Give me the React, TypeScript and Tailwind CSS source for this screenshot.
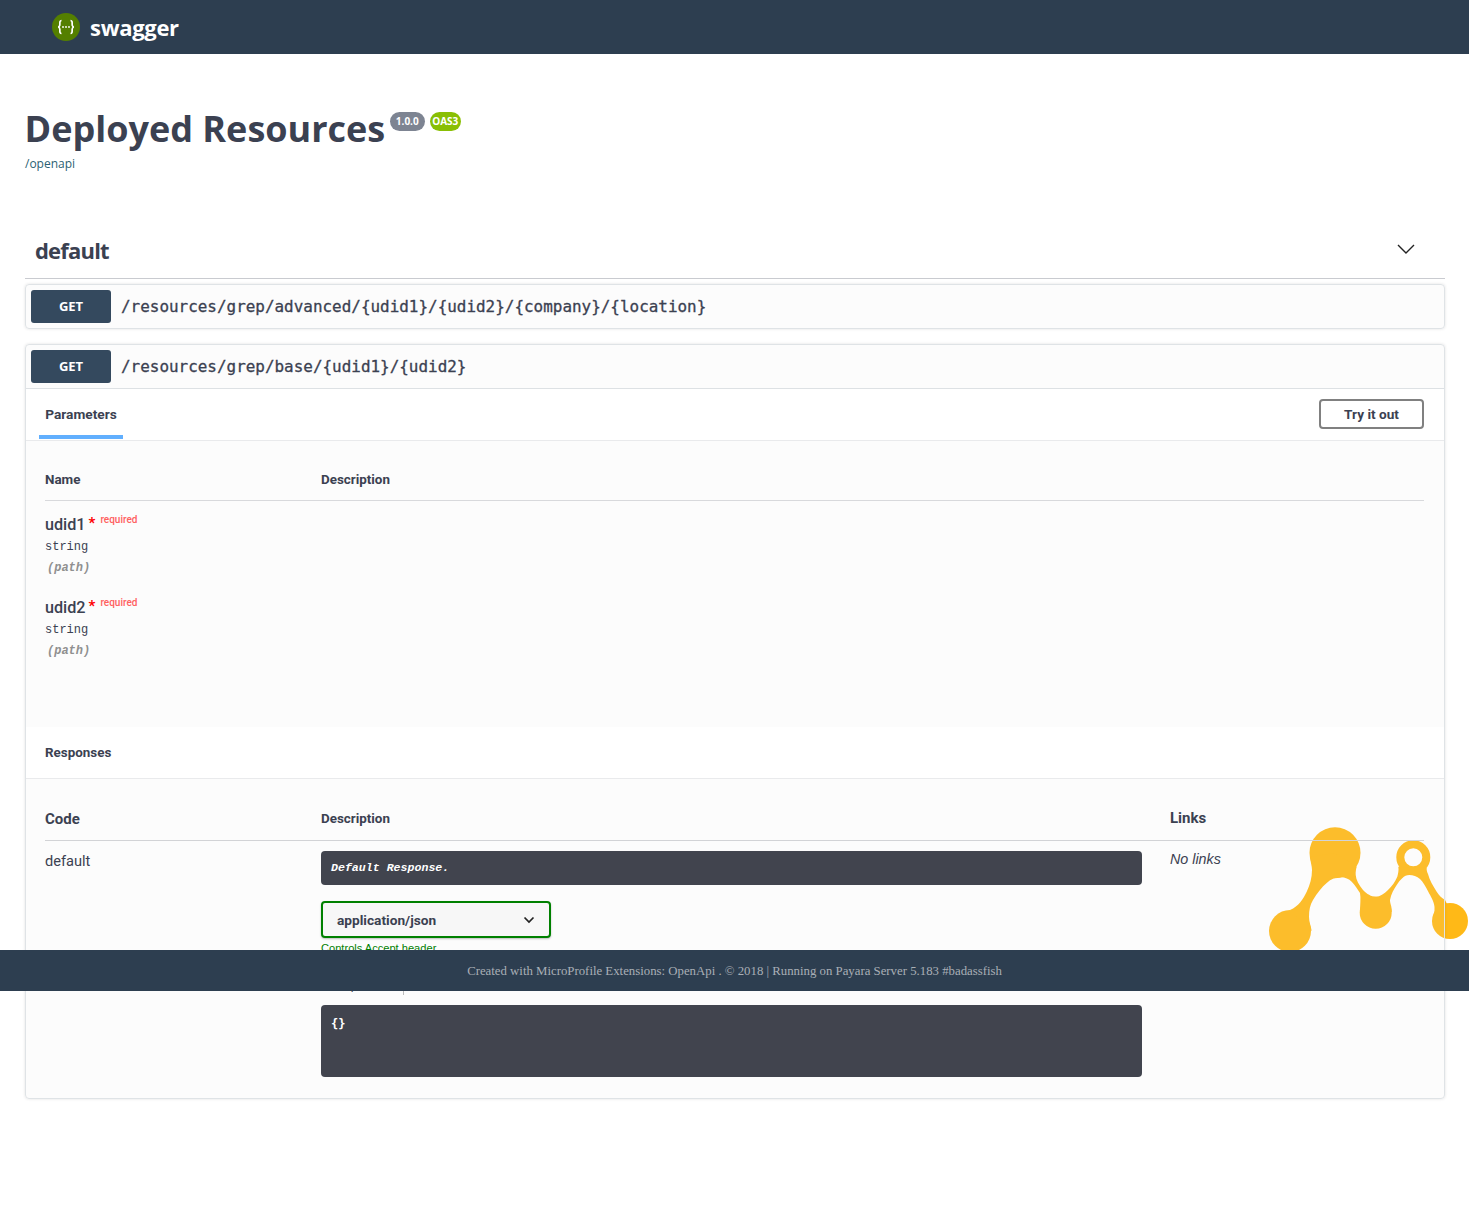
import React from "react";

const sans = "font-['Roboto',sans-serif]";
const open = "font-['Open_Sans',sans-serif]";
const mono = "font-['DejaVu_Sans_Mono',monospace]";
const cour = "font-['Liberation_Mono',monospace]";

function Summary({ path, border }: { path: string; border?: boolean }) {
  return (
    <div className={`flex h-[43px] items-center px-[5px] ${border ? "box-content border-b border-[#dde1e4]" : ""}`}>
      <div className={`flex h-[33px] w-[80px] items-center justify-center rounded-[3px] bg-[#34495e] pt-[1px] text-[13px] font-bold text-white ${open}`}>GET</div>
      <div className={`ml-[10px] text-[15.95px] text-[#3b4151] [-webkit-text-stroke:0.3px_#3b4151] ${mono}`}>{path}</div>
    </div>
  );
}

function Param({ name, top }: { name: string; top: string }) {
  return (
    <div className={top}>
      <div className="flex h-[20px] items-start">
        <span className={`text-[16.2px] leading-[22px] font-medium text-[#3b4151] ${sans}`}>{name}</span>
        <span className={`ml-[3px] text-[15px] leading-[18px] font-bold text-[#ff0000] ${sans}`}>*</span>
        <span className={`ml-[5px] mt-[-2px] text-[10px] leading-[16px] font-medium text-[#ff6060] ${sans}`}>required</span>
      </div>
      <div className={`mt-[5px] text-[12px] leading-[16px] text-[#3b4151] ${cour}`}>string</div>
      <div className={`ml-[2px] mt-[5px] text-[12px] leading-[16px] font-bold italic text-[#909090] ${cour}`}>(path)</div>
    </div>
  );
}

function Logo() {
  return (
    <svg className="absolute left-[1260px] top-[820px] h-[130px] w-[209px]" viewBox="0 0 209 130" fill="#ffb917">
      <circle cx="75" cy="32.7" r="25.5" />
      <circle cx="30" cy="111" r="21" />
      <circle cx="115.7" cy="92.7" r="16" />
      <circle cx="190" cy="101" r="18" />
      <circle cx="153.3" cy="37.3" r="13" fill="none" stroke="#ffb917" strokeWidth="8" />
      <path d="M50 37C50.5 42 52 46 52 50C52 58 50 65 46.7 71.7C43 79 39 86 30 90L51.7 111C51 106 49 102 49 96.7C49 90 50 85 53 80C57 73 62 67 66.7 63C71 59 76 57.3 81 57.3C85 57.3 89 59 91.7 61.7C95 65 98 70 100 73C101 78 100 85 100 92L131.7 92C132 86 130 84 130 80C131 74 134 69 136.7 65C140 60 144 55 149.3 55C153 55 157 56.5 160 59C163 62 166 67 168.3 71.7C170.5 76 174 81 174.5 87C175 92 173 97 172.7 102L190 90L185 80C181.5 78 179 75 176.7 71.7C173 66 169.5 60 168 54C167 52 166.5 50 166.7 48L138.3 46.7C139 50 138 54 137.3 56.7C135 62 132 66 128 70C124 74 120 76.7 116 76.7C111 76.7 107 74 103 70C99 65 96 60 95.7 55C95.5 52 96 49 96.7 46.7L75 33Z" />
    </svg>
  );
}

export default function App() {
  return (
    <div className="relative h-[1213px] overflow-hidden bg-white">
      <header className="relative z-10 flex h-[54px] items-center bg-[#2d3e50] pl-[52px]">
        <svg width="28" height="28" viewBox="0 0 28 28">
          <circle cx="14" cy="14" r="14" fill="#547f00" />
          <path d="M9.5 7.5C7 7.5 8.2 11 7.7 12.5C7.4 13.5 6.8 14 6 14C6.8 14 7.4 14.5 7.7 15.5C8.2 17 7 20.5 9.5 20.5M18.5 7.5C21 7.5 19.8 11 20.3 12.5C20.6 13.5 21.2 14 22 14C21.2 14 20.6 14.5 20.3 15.5C19.8 17 21 20.5 18.5 20.5" fill="none" stroke="#fff" strokeWidth="1.7" />
          <circle cx="11" cy="14" r="0.9" fill="#fff" />
          <circle cx="14" cy="14" r="0.9" fill="#fff" />
          <circle cx="17" cy="14" r="0.9" fill="#fff" />
        </svg>
        <span className={`ml-[10px] text-[22px] leading-[30px] font-bold tracking-[-0.3px] text-white ${open}`}>swagger</span>
      </header>

      <Logo />

      <main className="relative z-10 pl-[25px] pr-[24px]">
        <div className="flex items-start pt-[50px]">
          <h1 className={`ml-[-0.5px] text-[36px] leading-[50px] font-bold text-[#3b4151] ${open}`}>Deployed Resources</h1>
          <span className={`ml-[4.5px] mt-[8px] flex h-[19px] w-[35px] items-center justify-center rounded-full bg-[#7d8492] text-[10px] font-bold text-white ${open}`}>1.0.0</span>
          <span className={`ml-[5px] mt-[8px] flex h-[19px] w-[31px] items-center justify-center rounded-full bg-[#89bf04] text-[10px] font-bold text-white ${open}`}>OAS3</span>
        </div>
        <div className={`mt-[1px] text-[12px] leading-[18px] text-[#2b5f73] ${open}`}>/openapi</div>

        <div className="mt-[50px] flex h-[56px] items-center justify-between border-b border-[#c9cbd0] pl-[10px] pr-[29px]">
          <h2 className={`text-[22px] font-bold tracking-[-0.8px] text-[#3b4151] ${open}`}>default</h2>
          <svg className="mb-[3px]" width="20" height="20" viewBox="0 0 20 20" fill="none" stroke="#222" strokeWidth="1.4">
            <path d="M2 6l8 8 8-8" />
          </svg>
        </div>

        <section className="mt-[5px] h-[45px] rounded-[4px] border border-[#dfe3e6] bg-[#e1e1e1]/10 shadow-[0_0_3px_rgba(0,0,0,0.12)]">
          <Summary path="/resources/grep/advanced/{udid1}/{udid2}/{company}/{location}" />
        </section>

        <section className="mt-[15px] h-[755px] rounded-[4px] border border-[#dfe3e6] bg-[#e1e1e1]/10 shadow-[0_0_3px_rgba(0,0,0,0.12)]">
          <Summary path="/resources/grep/base/{udid1}/{udid2}" border />

          <div className="flex h-[52px] justify-between border-b border-[#e9eaec] bg-white pl-[13px] pr-[20px]">
            <div className={`flex h-[50px] w-[84px] items-center justify-center border-b-[4px] border-[#61affe] pt-[4px] text-[13.7px] font-bold text-[#3b4151] ${sans}`}>Parameters</div>
            <button className={`mt-[10px] h-[30px] w-[105px] rounded-[4px] border-2 border-[#808080] text-[13.6px] font-bold text-[#3b4151] ${sans}`}>Try it out</button>
          </div>

          <div className="h-[286px] pl-[19px] pr-[20px]">
            <div className={`flex h-[60px] items-end border-b border-[#d8d9dc] pb-[10px] text-[13.4px] font-bold text-[#3b4151] ${sans}`}>
              <div className="w-[276px]">Name</div>
              <div>Description</div>
            </div>
            <Param name="udid1" top="mt-[13px]" />
            <Param name="udid2" top="mt-[21px]" />
          </div>

          <div className={`flex h-[52px] items-center border-b border-[#e9eaec] bg-white px-[19px] pt-[2px] text-[13.4px] font-bold text-[#3b4151] ${sans}`}>Responses</div>

          <div className="pl-[19px] pr-[20px]">
            <div className={`flex h-[62px] items-end border-b border-[#d2d3d6] pb-[11px] text-[13.4px] font-bold text-[#3b4151] ${sans}`}>
              <div className="mb-[-1px] w-[276px] text-[15px]">Code</div>
              <div className="w-[849px]">Description</div>
              <div className="text-[15px]">Links</div>
            </div>
            <div className="flex pt-[10px]">
              <div className={`w-[276px] text-[14.6px] leading-[20px] text-[#3b4151] ${sans}`}>default</div>
              <div className="w-[821px]">
                <div className={`flex h-[34px] items-center rounded-[4px] bg-[#41444e] px-[10px] text-[11.6px] font-bold italic text-white ${cour}`}>Default Response.</div>
                <div className={`mt-[16px] flex h-[37px] w-[230px] items-center justify-between rounded-[4px] border-2 border-[#008000] bg-[#f7f7f7] pl-[14px] pr-[13px] text-[13.7px] font-bold text-[#3b4151] shadow-[0_1px_2px_rgba(0,0,0,0.25)] ${sans}`}>
                  <span className="pt-[2px]">application/json</span>
                  <svg width="14" height="14" viewBox="0 0 14 14" fill="none" stroke="#222" strokeWidth="1.7"><path d="M2.5 4.5L7 9l4.5-4.5" /></svg>
                </div>
                <div className="mt-[4px] font-['Liberation_Sans',sans-serif] text-[11.1px] leading-[12px] text-[#008000]">Controls Accept header</div>
                <div className={`mt-[27px] flex h-[14px] items-start text-[12px] leading-[8px] text-[#3b4151] ${sans}`}>
                  <span className="h-[14px] w-[83px] border-r border-[#bbb]">Example Value</span>
                  <span className="ml-[5px] opacity-60">Schema</span>
                </div>
                <div className={`mt-[10px] h-[72px] rounded-[4px] bg-[#41444e] px-[10px] pb-[10px] pt-[11px] text-[12px] leading-[16px] font-bold text-white ${mono}`}>{"{}"}</div>
              </div>
              <div className="ml-[28px] mt-[-2px] font-['Liberation_Sans',sans-serif] text-[14.3px] leading-[20px] italic text-[#3b4151]">No links</div>
            </div>
          </div>
        </section>
      </main>

      <footer className="absolute left-0 top-[950px] z-20 flex h-[41px] w-full items-center justify-center bg-[#2d3e50] pt-[2px] font-['Liberation_Serif',serif] text-[12.8px] text-[#a9afb6]">
        Created with MicroProfile Extensions: OpenApi . © 2018 | Running on Payara Server 5.183 #badassfish
      </footer>
    </div>
  );
}
